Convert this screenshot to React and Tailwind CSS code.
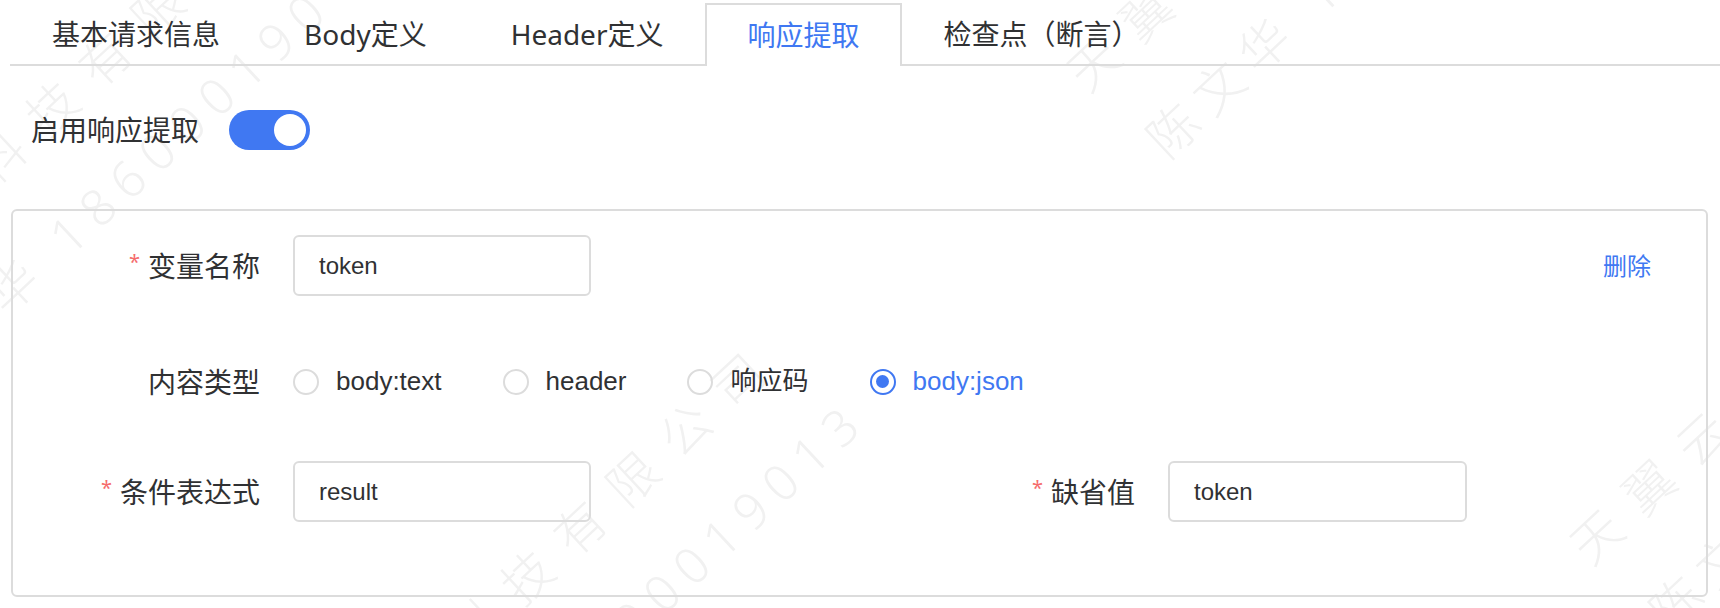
import React from "react";

const cjk = "font-['Noto_Sans','Noto_Sans_CJK_SC',sans-serif]";
const latin = "font-['Liberation_Sans','Noto_Sans_CJK_SC',sans-serif]";

const tabs = ["基本请求信息", "Body定义", "Header定义", "响应提取", "检查点（断言）"];

const Label = ({ text, required, className = "" }) => (
  <div className={`flex items-center justify-end pr-[33px] text-[28px] text-[#303133] ${cjk} ${className}`}>
    {required && <span className="mr-[8px] text-[20px] leading-none text-[#f56c6c] -translate-y-[4px]">*</span>}
    {text}
  </div>
);

const Input = ({ value, className = "" }) => (
  <div className={`flex h-[61px] items-center rounded-[6px] border-2 border-[#dcdcdc] pl-[24px] text-[24px] text-[#303133] ${latin} ${className}`}>
    {value}
  </div>
);

const Radio = ({ label, checked }) => (
  <div className="flex items-center">
    {checked ? (
      <span className="flex h-[26px] w-[26px] items-center justify-center rounded-full border-2 border-[#4078f2]">
        <span className="h-[13px] w-[13px] rounded-full bg-[#4078f2]" />
      </span>
    ) : (
      <span className="h-[26px] w-[26px] rounded-full border-2 border-[#dcdcdc]" />
    )}
    <span className={`ml-[17px] text-[26px] ${latin} ${checked ? "text-[#4078f2]" : "text-[#303133]"}`}>
      {label}
    </span>
  </div>
);

// faint diagonal watermark tile
const Watermark = ({ className }) => (
  <div className={`absolute origin-top-left rotate-[-43deg] whitespace-nowrap text-[50px] font-light leading-[50px] text-[#f1f1f1] tracking-[22px] ${cjk} ${className}`}>
    <div>天翼云科技有限公司</div>
    <div className="ml-[13px] mt-[53px] tracking-[12px]">陈文华 18600019013</div>
  </div>
);

export default function App() {
  return (
    <div className="relative h-[608px] w-[1720px] overflow-hidden bg-white">
      <div className="pointer-events-none absolute inset-0">
        <Watermark className="left-[-194px] top-[303px]" />
        <Watermark className="left-[281px] top-[772px]" />
        <Watermark className="left-[1058px] top-[62px]" />
        <Watermark className="left-[1561px] top-[535px]" />
      </div>

      <div className="relative">
        {/* Tabs */}
        <div className={`ml-[10px] flex items-end border-b-2 border-[#dcdcdc] pt-[3px] text-[28px] ${cjk}`}>
          {tabs.map((t) =>
            t === "响应提取" ? (
              <div
                key={t}
                className="-mb-[2px] flex h-[63px] items-center border-2 border-b-0 border-[#dcdcdc] bg-white px-[40px] pb-[2px] text-[#4078f2]"
              >
                {t}
              </div>
            ) : (
              <div key={t} className="flex h-[61px] items-center px-[42px] text-[#303133]">
                {t}
              </div>
            )
          )}
        </div>

        {/* Enable switch */}
        <div className="ml-[31px] mt-[44px] flex h-[40px] items-center">
          <span className={`text-[28px] text-[#303133] ${cjk}`}>启用响应提取</span>
          <div className="ml-[30px] flex h-[40px] w-[81px] items-center justify-end rounded-full bg-[#4078f2] pr-[4px]">
            <div className="h-[32px] w-[32px] rounded-full bg-white" />
          </div>
        </div>

        {/* Extraction card */}
        <div className="ml-[11px] mr-[12px] mt-[59px] rounded-[6px] border-2 border-[#dcdcdc] pb-[73px] pt-[24px]">
          <div className="flex h-[61px] items-center">
            <Label text="变量名称" required className="w-[280px]" />
            <Input value="token" className="w-[298px]" />
            <span className={`ml-auto mr-[55px] text-[24px] text-[#4078f2] ${cjk}`}>删除</span>
          </div>

          <div className="mt-[55px] flex h-[61px] items-center">
            <Label text="内容类型" className="w-[280px]" />
            <div className="flex items-center gap-[61px]">
              <Radio label="body:text" />
              <Radio label="header" />
              <Radio label="响应码" />
              <Radio label="body:json" checked />
            </div>
          </div>

          <div className="mt-[49px] flex h-[61px] items-center">
            <div className="flex w-[875px] items-center">
              <Label text="条件表达式" required className="w-[280px]" />
              <Input value="result" className="w-[298px]" />
            </div>
            <div className="flex items-center">
              <Label text="缺省值" required className="w-[280px]" />
              <Input value="token" className="w-[299px]" />
            </div>
          </div>
        </div>
      </div>
    </div>
  );
}
